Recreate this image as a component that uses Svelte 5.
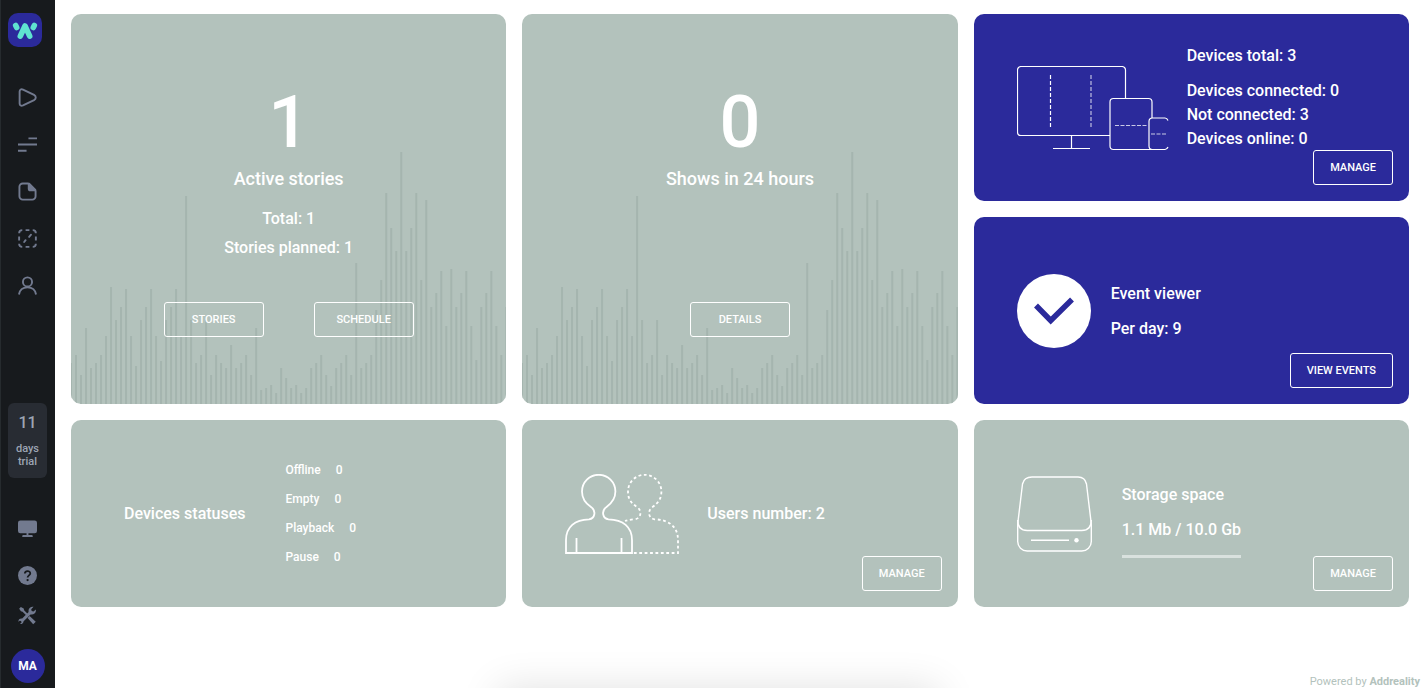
<script lang="ts">
  interface Status { name: string; value: number; }

  const statuses: Status[] = [
    { name: 'Offline', value: 0 },
    { name: 'Empty', value: 0 },
    { name: 'Playback', value: 0 },
    { name: 'Pause', value: 0 }
  ];

  const nav = ['Stories', 'Schedule', 'Files', 'Zones', 'Account'];

  // bar heights of the card backdrop, left to right
  const bars = [
    49, 29, 76, 36, 41, 49, 68, 117, 84, 97, 115, 68, 38, 84, 97, 115, 68, 43, 84, 97,
    115, 68, 208, 84, 41, 49, 84, 29, 49, 41, 36, 59, 36, 41, 49, 29, 76, 14, 16, 19,
    11, 36, 26, 16, 19, 11, 16, 36, 41, 49, 29, 18, 36, 41, 49, 29, 141, 36, 41, 49,
    94, 124, 211, 176, 153, 252, 153, 176, 211, 124, 204, 97, 111, 133, 78, 135, 97, 111,
    133, 78, 44, 97, 111, 133, 78, 49, 97
  ];
</script>

{#snippet backdrop()}
  <svg class="backdrop" viewBox="0 0 435 252" preserveAspectRatio="none" aria-hidden="true">
    <rect x="0" y="211" width="1" height="41" />
    {#each bars as h, i (i)}
      <rect x={4 + i * 5} y={252 - h} width="2" height={h} />
    {/each}
  </svg>
{/snippet}

<div class="app">
  <aside class="sidebar">
    <a class="logo" href="#home" aria-label="Home">
      <svg viewBox="0 0 34 34" fill="none" stroke="#5fe3d0" stroke-linecap="round" stroke-linejoin="round">
        <path d="M7.700 12.500l1 2M26.300 12.500l-1 2" stroke-width="5.600" />
        <path d="M12.300 23.200L17 13l4.700 10.200" stroke-width="5.600" />
      </svg>
    </a>
    <nav>
      {#each nav as item, i (item)}
        <a class="nav-item" href="#{item.toLowerCase()}" aria-label={item}>
          <svg class="icon" viewBox="0 0 20 20" fill="none" stroke="currentColor" stroke-width="2">
            {#if i === 0}
              <path d="M1.700 3.800v12.400c0 2.200 1.600 3 3.600 2.100l11.600-5.600c2.400-1.400 2.400-4 0-5.400L5.300 1.700C3.300.8 1.700 1.600 1.700 3.800z" />
            {:else if i === 1}
              <path d="M11 3.500h9M0 10h20M0 16.500h9" />
            {:else if i === 2}
              <path d="M11 1.500H5A3.500 3.500 0 0 0 1.500 5v10A3.500 3.500 0 0 0 5 18.500h10a3.500 3.500 0 0 0 3.500-3.500V9" />
              <path d="M11 1.500h1l6.500 6.500v1H13a2 2 0 0 1-2-2z" fill="currentColor" stroke-width="1.400" stroke-linejoin="round" />
            {:else if i === 3}
              <path d="M4.500 1.200Q1.200 1.200 1.200 4.500M8 1.200h4M15.500 1.200q3.300 0 3.300 3.300M18.800 8v4M18.800 15.500q0 3.300-3.300 3.300M12 18.800H8M4.500 18.800q-3.300 0-3.300-3.300M1.200 12V8" />
              <path d="M6.500 13.700l1.500-1.900M11.700 8.300l2-2.300" stroke-linecap="round" />
            {:else}
              <circle cx="10" cy="6.200" r="4.800" />
              <path d="M1 19.500c.8-5 4.200-7.500 9-7.500s8.200 2.500 9 7.500" />
            {/if}
          </svg>
        </a>
      {/each}
    </nav>

    <div class="bottom">
      <a class="trial" href="#billing">
        <span class="days">11</span>
        <span>days</span>
        <span>trial</span>
      </a>
      <a class="tool screen" href="#screens" aria-label="Screens">
        <svg class="icon" viewBox="0 0 20 20" fill="currentColor">
          <path d="M2.500 1.500h15A2.500 2.500 0 0 1 20 4v8.500a2.500 2.500 0 0 1-2.500 2.500H11v1.800h3.500q1 0 1 1.200v1h-11v-1q0-1.200 1-1.200H9V15H2.500A2.500 2.500 0 0 1 0 12.500V4a2.500 2.500 0 0 1 2.500-2.500z" />
        </svg>
      </a>
      <a class="tool" href="#help" aria-label="Help">
        <svg class="icon" viewBox="0 0 20 20">
          <circle cx="10" cy="10" r="10" fill="currentColor" />
          <path d="M7.200 8c0-3.600 5.700-3.500 5.700-.2 0 2-2.800 2.200-2.800 4.400" fill="none" stroke="#171a1d" stroke-width="1.900" />
          <circle cx="10.100" cy="14.800" r="1.200" fill="#171a1d" />
        </svg>
      </a>
      <a class="tool" href="#settings" aria-label="Settings">
        <svg class="icon" viewBox="0 0 20 20" fill="currentColor">
          <path d="M1.200 2.800L3 1l3 1.700.4 1.700 4.200 4.300-1.500 1.500-4.300-4.200-1.700-.4z" />
          <path d="M12.200 10.600l6.500 5.900-2.700 2.700-5.900-6.500z" />
          <path d="M18.800 3.800a4.500 4.500 0 0 1-5.600 5.100l-7.300 7.200a3 3 0 0 1-3.700 2.700l1.700-1.700-.8-1.300-1.400-.4-1.200 1.100a3 3 0 0 1 3.900-3.300l6.800-6.800A4.500 4.500 0 0 1 16.400.9l-2.500 2.600.5 1.800 1.900.6z" />
        </svg>
      </a>
      <button class="avatar" type="button">MA</button>
    </div>
  </aside>

  <main>
    <div class="cards">
      <section class="card tall">
        {@render backdrop()}
        <div class="summary">
          <strong class="big">1</strong>
          <h2>Active stories</h2>
          <p>Total: 1</p>
          <p>Stories planned: 1</p>
          <div class="row-buttons">
            <button class="btn wide" type="button">STORIES</button>
            <button class="btn wide" type="button">SCHEDULE</button>
          </div>
        </div>
      </section>

      <section class="card tall">
        {@render backdrop()}
        <div class="summary">
          <strong class="big">0</strong>
          <h2>Shows in 24 hours</h2>
          <div class="row-buttons">
            <button class="btn wide" type="button">DETAILS</button>
          </div>
        </div>
      </section>

      <section class="card blue">
        <div class="body">
          <svg class="devices" viewBox="0 0 152 85" fill="none" stroke="#fff" stroke-width="1.200" aria-hidden="true">
            <path d="M93 69.500H4a3.500 3.500 0 0 1-3.500-3.500V4A3.500 3.500 0 0 1 4 .5h101a3.500 3.500 0 0 1 3.500 3.500v28.500M54.500 69.500v13M36 82.500h37" />
            <path d="M33.500 9v53" stroke-dasharray="4 2" />
            <path d="M74 9v53" stroke-dasharray="4 2" stroke-opacity=".7" />
            <path d="M135 52V36a3.500 3.500 0 0 0-3.500-3.500h-35A3.500 3.500 0 0 0 93 36v44a3.500 3.500 0 0 0 3.500 3.500H135" />
            <path d="M98 59.500h33M134 68h15" stroke-dasharray="4 1.500" stroke-opacity=".75" />
            <path d="M151 54.500q-1-2.500-3-2.500h-12.500a3.500 3.500 0 0 0-3.500 3.500V80a3.500 3.500 0 0 0 3.500 3.500H148q2 0 3-2.500" />
          </svg>
          <div class="text device-text">
            <p class="lead">Devices total: 3</p>
            <p>Devices connected: 0</p>
            <p>Not connected: 3</p>
            <p>Devices online: 0</p>
          </div>
        </div>
        <button class="btn corner" type="button">MANAGE</button>
      </section>

      <section class="card blue">
        <div class="body">
          <svg class="check" viewBox="0 0 74 74" aria-hidden="true">
            <circle cx="37" cy="37" r="37" fill="#fff" />
            <path d="M19 31.500L33.700 46.500 55 25.500" fill="none" stroke="#2b2a9b" stroke-width="5.500" />
          </svg>
          <div class="text">
            <p class="lead">Event viewer</p>
            <p>Per day: 9</p>
          </div>
        </div>
        <button class="btn corner" type="button">VIEW EVENTS</button>
      </section>

      <section class="card">
        <div class="body statuses">
          <h3>Devices statuses</h3>
          <dl>
            {#each statuses as s (s.name)}
              <div>
                <dt>{s.name}</dt>
                <dd>{s.value}</dd>
              </div>
            {/each}
          </dl>
        </div>
      </section>

      <section class="card">
        <div class="body">
          <svg class="users" viewBox="0 0 114 80" fill="none" stroke="#fff" stroke-width="1.800" aria-hidden="true">
            <path d="M1 79V66C1 53 10 45.500 24 45.300c6-.8 7.500-8.500 2-12.300C20 29 17 25 17 17.500a16.700 16.700 0 0 1 33.400 0C50.400 25 47 29 41.500 33c-5.500 3.800-4 11.500 2 12.300C58 45.500 67 53 67 66v13zM11.500 64v15M56.500 64v15" />
            <path d="M60 47q4-1.500 10-1.700c6-.8 7.500-8.500 2-12.300-6-4-9-8-9-15.500a16.700 16.700 0 0 1 33.400 0c0 7.500-3.400 11.500-8.900 15.500-5.500 3.800-4 11.500 2 12.300C104 45.500 113 53 113 66v13H68" stroke-dasharray="2.800 2.600" />
          </svg>
          <div class="text">
            <p>Users number: 2</p>
          </div>
        </div>
        <button class="btn corner" type="button">MANAGE</button>
      </section>

      <section class="card">
        <div class="body">
          <svg class="drive" viewBox="0 0 75 76" fill="none" stroke="#fff" stroke-width="1.400" aria-hidden="true">
            <path d="M15 1h46q7 0 8.500 7l4.800 40v17.500a9.500 9.500 0 0 1-9.500 9.500H10.200A9.500 9.500 0 0 1 .7 65.500V48L5.500 8Q7 1 15 1z" />
            <path d="M.7 44q0 10.500 9.500 10.500h54.600q9.500 0 9.500-10.500" />
            <path d="M14 64.300h38" />
            <circle cx="59.500" cy="64.300" r="2.200" fill="#fff" stroke="none" />
          </svg>
          <div class="text storage">
            <p class="lead">Storage space</p>
            <p>1.1 Mb / 10.0 Gb</p>
            <div class="meter"></div>
          </div>
        </div>
        <button class="btn corner" type="button">MANAGE</button>
      </section>
    </div>

    <footer>Powered by <a href="#addreality">Addreality</a></footer>
  </main>

  <div class="tray"></div>
</div>

<style>
  :global(body) { margin: 0; background: #fff; }
  .app {
    display: flex; min-height: 100vh; color: #fff;
    font-family: Roboto, "Liberation Sans", sans-serif; font-weight: 500;
  }
  a { color: inherit; text-decoration: none; }
  svg { display: block; flex: none; }
  p, h2, h3, dl, dd { margin: 0; font-weight: 500; }
  button { font: inherit; color: inherit; cursor: pointer; box-sizing: border-box; }

  .sidebar {
    box-sizing: border-box; width: 55px; flex: none; background: #171a1d;
    border-left: 1px solid #262b2e; padding: 13px 1px 5px 0;
    display: flex; flex-direction: column; align-items: center; color: #727a8f;
  }
  .logo { width: 34px; height: 34px; border-radius: 10px; background: #2b2a9b; margin-right: 5px; }
  nav { margin-top: 27px; }
  .nav-item { display: flex; align-items: center; height: 47px; }
  .icon { width: 19px; height: 19px; }
  .bottom { margin-top: auto; display: flex; flex-direction: column; align-items: center; }
  .trial {
    box-sizing: border-box; width: 39px; height: 75px; padding-top: 10px; margin-bottom: 30px;
    border-radius: 6px; background: #282c33; color: #9da5b4;
    display: flex; flex-direction: column; align-items: center; font-size: 11px; line-height: 13px;
  }
  .days { font-size: 16px; line-height: 20px; margin-bottom: 9px; }
  .tool { display: flex; align-items: center; height: 40px; }
  .screen { margin-bottom: 7px; }
  .avatar {
    width: 34px; height: 34px; margin-top: 14px; padding: 0; border: 0; border-radius: 50%;
    background: #2b2a9b; color: #fff; font-size: 12px; font-weight: 700;
  }

  main { flex: 1; min-width: 0; display: flex; flex-direction: column; }
  .cards {
    display: grid; grid-template-columns: repeat(3, minmax(0, 1fr));
    grid-auto-rows: minmax(187px, auto); gap: 16px; padding: 14px 13px 0 16px;
  }
  .card { position: relative; display: grid; border-radius: 10px; background: #b3c2bc; overflow: hidden; }
  .blue { background: #2b2a9b; }
  .tall { grid-row: span 2; }
  .backdrop { position: absolute; left: 0; bottom: 0; width: 100%; height: 252px; fill: #a5b5af; }

  .summary {
    position: relative; display: flex; flex-direction: column; align-items: center;
    padding: 67px 0; font-size: 16px; line-height: 29px;
  }
  .big { font-size: 72px; line-height: 84px; font-weight: 500; }
  h2 { font-size: 18px; line-height: 28px; margin-bottom: 11px; }
  .row-buttons { display: flex; gap: 50px; margin-top: auto; }
  .btn {
    height: 35px; padding: 0 16px; border: 1px solid #fff; border-radius: 3px;
    background: transparent; font-size: 11px;
  }
  .wide { width: 100px; }
  .corner { grid-area: 1 / 1; place-self: end; margin: 16px; }

  .body { grid-area: 1 / 1; display: flex; align-items: center; padding-left: 43px; }
  .text { font-size: 16px; line-height: 24px; padding-top: 1px; }
  .lead { margin-bottom: 11px; }
  .devices { width: 152px; height: 85px; margin: 2px 18px 0 0; }
  .device-text { padding-bottom: 21px; }
  .check { width: 74px; height: 74px; margin-right: 20px; }
  .users { width: 114px; height: 80px; margin-right: 28px; }
  .drive { width: 75px; height: 76px; margin-right: 30px; }
  .storage { padding-top: 14px; }
  .meter { height: 3px; margin-top: 13px; background: #d9e1de; }
  .statuses { padding-left: 53px; gap: 40px; }
  h3 { font-size: 16px; line-height: 24px; }
  dl { font-size: 12px; line-height: 29px; }
  dl div { display: flex; gap: 15px; }

  footer {
    margin-top: auto; padding-right: 2px; text-align: right;
    font-size: 11px; line-height: 13px; color: #b3c2bc; font-weight: 400;
  }
  footer a { font-weight: 700; }

  /* sits under the lower edge of the window, only its shadow shows */
  .tray { position: fixed; top: 100%; left: 35%; width: 31%; height: 60px; box-shadow: 0 0 40px rgba(0, 0, 0, .12); }
</style>
